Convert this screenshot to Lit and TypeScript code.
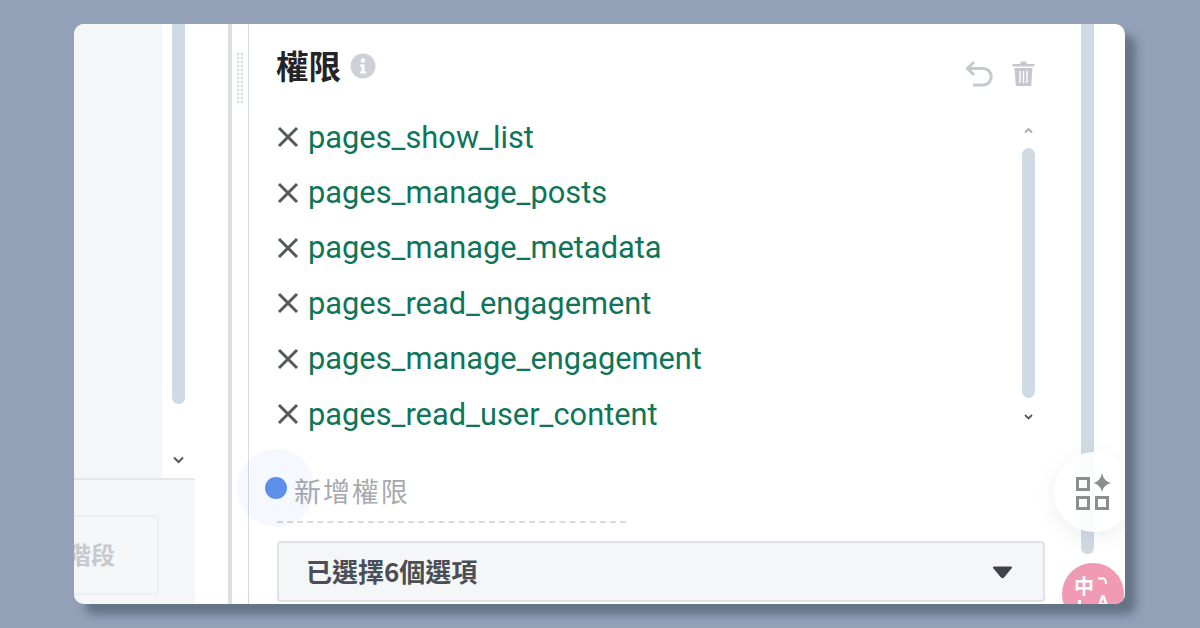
import { LitElement, html, css } from "lit";
import { customElement } from "lit/decorators.js";

const PERMS = [
  "pages_show_list",
  "pages_manage_posts",
  "pages_manage_metadata",
  "pages_read_engagement",
  "pages_manage_engagement",
  "pages_read_user_content",
];

@customElement("app-root")
export class AppRoot extends LitElement {
  static styles = css`
    :host {
      display: block;
      width: 1200px;
      height: 628px;
      background: #92a1b8;
      font-family: Roboto, "Noto Sans CJK TC", sans-serif;
      overflow: hidden;
    }
    * { box-sizing: border-box; }
    .page { padding: 24px 75px 24px 74px; height: 628px; }
    .shadow {
      height: 580px;
      border-radius: 10px;
      box-shadow: 11px 11px 9px rgba(85, 98, 117, 0.72);
    }
    .card {
      position: relative;
      height: 580px;
      background: #fff;
      border-radius: 10px;
      overflow: hidden;
      display: flex;
    }
    .left { width: 121px; flex: none; display: flex; flex-direction: column; }
    .left-top { height: 456px; flex: none; display: flex; border-bottom: 2px solid #e3e6ea; }
    .left-fill { width: 88px; background: #f5f6f8; }
    .left-bar { width: 33px; padding-left: 10px; position: relative; }
    .left-bar i { display: block; width: 13px; height: 380px; background: #cfdbe4; border-radius: 0 0 6px 6px; }
    .left-bar svg { position: absolute; left: 11px; top: 432px; }
    .left-bottom { flex: 1; background: #f5f6f8; padding: 35px 36px 0 0; }
    .ghost {
      height: 80px;
      border: 2px solid #eceef1;
      border-left: 0;
      border-radius: 0 4px 4px 0;
      display: flex;
      align-items: center;
      justify-content: flex-end;
      padding: 0 42px 3px 0;
      color: #c6c9ce;
      font: 700 24px "Noto Sans CJK TC", sans-serif;
      white-space: nowrap;
      overflow: hidden;
    }
    .gutter { width: 33px; flex: none; }
    .sep { width: 21px; flex: none; border-left: 4px solid #dce0e5; border-right: 1.5px solid #d6dbe1; position: relative; }
    .dots {
      position: absolute;
      left: 4px;
      top: 28px;
      width: 8px;
      height: 52px;
      background-image: radial-gradient(circle, #dcdfe3 1.3px, transparent 1.7px);
      background-size: 4px 4px;
    }
    .main { flex: 1; min-width: 0; padding: 0 0 0 28px; display: flex; flex-direction: column; position: relative; }
    .head { height: 85.500px; flex: none; display: flex; align-items: flex-start; padding-top: 20px; }
    .title { font: 700 32.500px/42px "Noto Sans CJK TC", sans-serif; color: #222427; margin-left: -1px; }
    .info { margin: 9px 0 0 9px; }
    .tools { margin-left: auto; margin-right: 46px; display: flex; gap: 19px; padding-top: 16px; }
    .list-wrap { display: flex; height: 333.500px; flex: none; }
    .list { width: 745px; flex: none; }
    .row { display: flex; align-items: center; height: 55.400px; }
    .row svg { flex: none; margin-right: 9px; }
    .row span { color: #0f7558; font-size: 30.800px; }
    .vbar { width: 13px; position: relative; }
    .vbar i { position: absolute; left: 0; top: 38.500px; width: 13px; height: 250px; border-radius: 7px; background: #cfdbe4; }
    .vbar svg { position: absolute; left: 1px; }
    .add { height: 80px; flex: none; width: 349px; border-bottom: 2px dashed #d7dade; padding: 27px 0 0 17px; font: 400 27px/42px "Noto Sans CJK TC", sans-serif; color: #a6a9ae; letter-spacing: 1.900px; }
    .select {
      margin-top: 18px;
      width: 768px;
      height: 61px;
      flex: none;
      background: #f4f6f8;
      border: 2px solid #dfe2e6;
      border-radius: 4px;
      display: flex;
      align-items: center;
      justify-content: space-between;
      padding: 0 30px 2px 28px;
      font: 700 26px "Noto Sans CJK TC", sans-serif;
      color: #4a4e55;
    }
    .select svg { margin-top: 3px; }
    .select span { margin-left: -1px; }
    .vscroll { width: 13px; flex: none; }
    .vscroll i { display: block; width: 13px; height: 530px; background: #cfdbe4; border-radius: 0 0 6px 6px; }
    .right { width: 31px; flex: none; }
    .halo { position: absolute; left: 163px; top: 425px; width: 78px; height: 78px; border-radius: 50%; background: rgba(91, 143, 232, 0.06); display: flex; align-items: center; justify-content: center; }
    .halo i { width: 22px; height: 22px; border-radius: 50%; background: #5b8fe8; }
    .fab { position: absolute; left: 980px; top: 428px; width: 80px; height: 80px; border-radius: 50%; background: rgba(255, 255, 255, 0.88); box-shadow: 0 6px 20px rgba(90, 100, 120, 0.1); }
    .fab svg { position: absolute; left: 20px; top: 18px; }
    .lang { position: absolute; left: 988px; top: 539px; width: 62px; height: 62px; border-radius: 50%; background: #f09ab4; color: #fff; overflow: hidden; }
    .lang b { position: absolute; left: 12px; top: 11px; font: 700 20px/24px "Noto Sans CJK TC", sans-serif; }
    .lang u { position: absolute; left: 16px; top: 37px; width: 3px; height: 6px; background: #fff; }
    .lang em { position: absolute; left: 35px; top: 29px; font: 700 18px/20px Roboto, sans-serif; }
    .lang svg { position: absolute; left: 35px; top: 14px; }
  `;

  render() {
    const close = html`<svg width="22" height="22" viewBox="0 0 22 22"><path d="M2 2 L20 20 M20 2 L2 20" stroke="#55585f" stroke-width="3" fill="none"/></svg>`;
    return html`
      <div class="page">
        <div class="shadow">
          <div class="card">
            <div class="left">
              <div class="left-top">
                <div class="left-fill"></div>
                <div class="left-bar">
                  <i></i>
                  <svg width="11" height="8" viewBox="0 0 11 8"><path d="M1 1.500 L5.500 6 L10 1.500" stroke="#55585f" stroke-width="2" fill="none"/></svg>
                </div>
              </div>
              <div class="left-bottom"><div class="ghost"><span>階段</span></div></div>
            </div>
            <div class="gutter"></div>
            <div class="sep"><div class="dots"></div></div>
            <div class="main">
              <div class="head">
                <div class="title">權限</div>
                <svg class="info" width="26" height="26" viewBox="0 0 26 26">
                  <circle cx="13" cy="13" r="12.500" fill="#cdd0d6"/>
                  <circle cx="13" cy="7.500" r="2.200" fill="#fff"/>
                  <path d="M10 11.500 H14.600 V18.500 H16.200 V20.500 H10 V18.500 H11.600 V13.500 H10 Z" fill="#fff"/>
                </svg>
                <div class="tools">
                  <svg width="28" height="28" viewBox="0 0 28 28"><path d="M9 2 L2.500 8.500 L9 15 M3 8.500 H18 A8.200 8.200 0 0 1 18 25 H8" stroke="#c5c9ce" stroke-width="3" fill="none"/></svg>
                  <svg width="23" height="27" viewBox="0 0 23 27"><path d="M0.500 4 H8 L9 1.500 H14 L15 4 H22.500 V6.500 H0.500 Z M2.500 8 H20.500 L19.200 26 H3.800 Z" fill="#c5c9ce"/><path d="M8 11 V23 M11.500 11 V23 M15 11 V23" stroke="#fff" stroke-width="1.400"/></svg>
                </div>
              </div>
              <div class="list-wrap">
                <div class="list">
                  ${PERMS.map((p) => html`<div class="row">${close}<span>${p}</span></div>`)}
                </div>
                <div class="vbar">
                  <svg style="top:17px" width="11" height="8" viewBox="0 0 11 8"><path d="M2 5.500 L5.500 2 L9 5.500" stroke="#a9adb3" stroke-width="1.800" fill="none"/></svg>
                  <i></i>
                  <svg style="top:303px" width="11" height="8" viewBox="0 0 11 8"><path d="M2 2 L5.500 5.500 L9 2" stroke="#55585f" stroke-width="1.800" fill="none"/></svg>
                </div>
              </div>
              <div class="add">新增權限</div>
              <div class="select">
                <span>已選擇6個選項</span>
                <svg width="21" height="13" viewBox="0 0 21 13"><path d="M2.500 0.500 H18.500 Q21 0.500 19.500 2.500 L12 11.500 Q10.500 13 9 11.500 L1.500 2.500 Q0 0.500 2.500 0.500 Z" fill="#3f434a"/></svg>
              </div>
            </div>
            <div class="vscroll"><i></i></div>
            <div class="right"></div>
            <div class="halo"><i></i></div>
            <div class="fab">
              <svg width="40" height="40" viewBox="0 0 40 40">
                <g fill="none" stroke="#8b8d91" stroke-width="3">
                  <rect x="3.500" y="8.500" width="11" height="11"/>
                  <rect x="3.500" y="27.500" width="11" height="11"/>
                  <rect x="22.500" y="27.500" width="11" height="11"/>
                </g>
                <path d="M28 3 Q29.500 11 37 13 Q29.500 15 28 22 Q26.500 15 19.500 13 Q26.500 11 28 3 Z" fill="#8b8d91"/>
              </svg>
            </div>
            <div class="lang">
              <b>中</b>
              <u></u>
              <svg width="12" height="12" viewBox="0 0 12 12"><path d="M1 1.500 H6 Q9 1.500 9 7" stroke="#fff" stroke-width="2.200" fill="none"/></svg>
              <em>A</em>
            </div>
          </div>
        </div>
      </div>
    `;
  }
}
